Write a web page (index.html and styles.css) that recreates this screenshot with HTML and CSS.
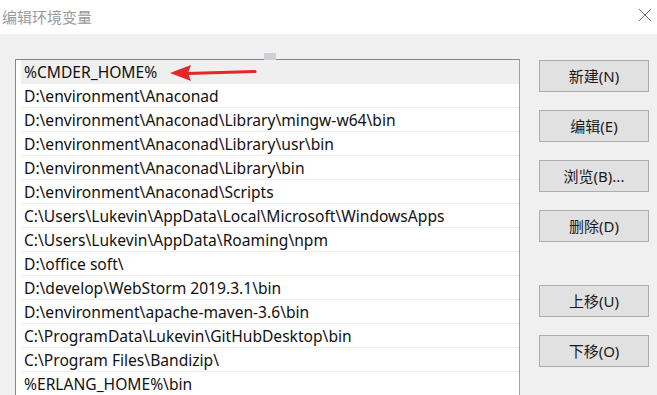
FILE: index.html
```html
<!DOCTYPE html>
<html lang="zh-CN">

<head>
  <meta charset="UTF-8">
  <title>编辑环境变量</title>
  <link rel="stylesheet" href="styles.css">
</head>

<body>
  <div class="titlebar">
    <span class="title">编辑环境变量</span>
    <svg class="close" width="14" height="14" viewBox="0 0 14 14">
      <path d="M1 1 L13 13 M13 1 L1 13" stroke="#6f6f6f" stroke-width="1" fill="none" />
    </svg>
  </div>

  <div class="content">
    <div class="listbox">
      <div class="row selected">%CMDER_HOME%</div>
      <div class="row">D:\environment\Anaconad</div>
      <div class="row">D:\environment\Anaconad\Library\mingw-w64\bin</div>
      <div class="row">D:\environment\Anaconad\Library\usr\bin</div>
      <div class="row">D:\environment\Anaconad\Library\bin</div>
      <div class="row">D:\environment\Anaconad\Scripts</div>
      <div class="row">C:\Users\Lukevin\AppData\Local\Microsoft\WindowsApps</div>
      <div class="row">C:\Users\Lukevin\AppData\Roaming\npm</div>
      <div class="row">D:\office soft\</div>
      <div class="row">D:\develop\WebStorm 2019.3.1\bin</div>
      <div class="row">D:\environment\apache-maven-3.6\bin</div>
      <div class="row">C:\ProgramData\Lukevin\GitHubDesktop\bin</div>
      <div class="row">C:\Program Files\Bandizip\</div>
      <div class="row">%ERLANG_HOME%\bin</div>
    </div>

    <div class="buttons">
      <button class="btn">新建(N)</button>
      <button class="btn">编辑(E)</button>
      <button class="btn">浏览(B)...</button>
      <button class="btn">删除(D)</button>
      <button class="btn gap">上移(U)</button>
      <button class="btn">下移(O)</button>
    </div>

    <!-- annotation drawn over the screenshot -->
    <svg class="arrow" width="100" height="20" viewBox="0 0 100 20">
      <path d="M22 11.5 L90 9.5" stroke="#e5262b" stroke-width="3.2" stroke-linecap="round" fill="none" />
      <path d="M5 11 L26 3 L23 11 L26 19 Z" fill="#e5262b" />
    </svg>
    <div class="marker"></div>
  </div>
</body>

</html>
```

FILE: styles.css
```css
/* Window */
body {
  margin: 0;
  height: 100vh;
  font-family: "Noto Sans", "Noto Sans CJK SC", sans-serif;
  background-color: #f0f0f0;
  overflow: hidden;
}

.titlebar {
  height: 34px;
  background-color: #fff;
  display: flex;
  align-items: center;
  justify-content: space-between;
  padding: 0 5px 0 2px;
}

.title {
  font-family: "Noto Sans CJK SC", sans-serif;
  font-size: 15px;
  color: #9a9a9a;
  margin-top: -2px;
}

.close {
  margin-top: -4px;
}

/* Main area */
.content {
  position: relative;
  display: flex;
  align-items: flex-start;
  padding: 25px 0 0 15px;
}

.listbox {
  width: 498px;
  height: 336px;
  overflow: hidden;
  background-color: #fff;
  border: 1px solid #828790;
  border-right-color: #a0a0a0;
  border-bottom: none;
  padding: 0 0 0 5px;
}

.row {
  height: 23px;
  line-height: 25px;
  border-bottom: 1px solid #efefef;
  padding-left: 3px;
  font-size: 15.6px;
  color: #111;
  white-space: nowrap;
  overflow: hidden;
}

.row.selected {
  background-color: #efefef;
}

/* Buttons */
.buttons {
  display: flex;
  flex-direction: column;
  gap: 18px;
  margin: 1px 0 0 19px;
}

.btn {
  width: 110px;
  height: 32px;
  background-color: #e1e1e1;
  border: 1px solid #adadad;
  font-family: "Noto Sans", "Noto Sans CJK SC", sans-serif;
  font-size: 15px;
  color: #1a1a1a;
  padding: 0 0 2px;
}

.btn.gap {
  margin-top: 25px;
}

/* Overlays */
.arrow {
  position: absolute;
  left: 165px;
  top: 28px;
}

.marker {
  position: absolute;
  left: 264px;
  top: 19px;
  width: 12px;
  height: 7px;
  background-color: #cfd0d5;
}
```
